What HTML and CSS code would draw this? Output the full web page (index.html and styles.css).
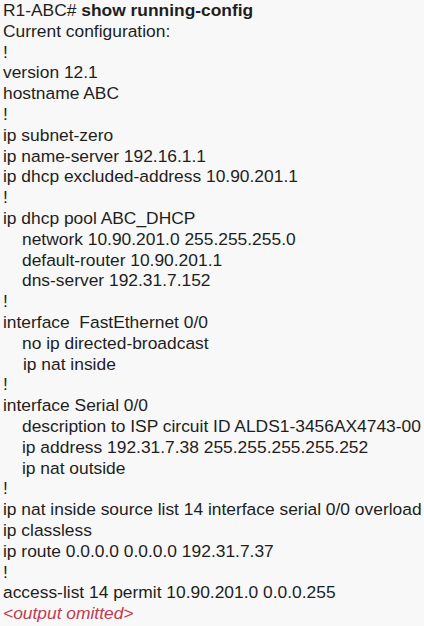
FILE: index.html
```html
<!DOCTYPE html>
<html>
<head>
<meta charset="utf-8">
<link rel="stylesheet" href="styles.css">
</head>
<body>
<div class="config">
<div class="line">R1-ABC# <b>show running-config</b></div>
<div class="line">Current configuration:</div>
<div class="line">!</div>
<div class="line">version 12.1</div>
<div class="line">hostname ABC</div>
<div class="line">!</div>
<div class="line">ip subnet-zero</div>
<div class="line">ip name-server 192.16.1.1</div>
<div class="line">ip dhcp excluded-address 10.90.201.1</div>
<div class="line">!</div>
<div class="line">ip dhcp pool ABC_DHCP</div>
<div class="line sub">network 10.90.201.0 255.255.255.0</div>
<div class="line sub">default-router 10.90.201.1</div>
<div class="line sub">dns-server 192.31.7.152</div>
<div class="line">!</div>
<div class="line">interface&nbsp; FastEthernet 0/0</div>
<div class="line sub">no ip directed-broadcast</div>
<div class="line sub2">ip nat inside</div>
<div class="line">!</div>
<div class="line">interface Serial 0/0</div>
<div class="line sub">description to ISP circuit ID ALDS1-3456AX4743-00</div>
<div class="line sub">ip address 192.31.7.38 255.255.255.255.252</div>
<div class="line sub">ip nat outside</div>
<div class="line">!</div>
<div class="line">ip nat inside source list 14 interface serial 0/0 overload</div>
<div class="line">ip classless</div>
<div class="line">ip route 0.0.0.0 0.0.0.0 192.31.7.37</div>
<div class="line">!</div>
<div class="line">access-list 14 permit 10.90.201.0 0.0.0.255</div>
<div class="line omitted">&lt;output omitted&gt;</div>
</div>
</body>
</html>
```
FILE: styles.css
```css
html, body {
  margin: 0;
  padding: 0;
  background: #f8f8f8;
}
.config {
  padding: 0 0 0 3px;
  font-family: "Liberation Sans", Arial, sans-serif;
  font-size: 17.4px;
  line-height: 20.8px;
  color: #1e1e1e;
  white-space: nowrap;
}
.line b {
  font-weight: bold;
}
.sub {
  padding-left: 19px;
}
.sub2 {
  padding-left: 20px;
}
.omitted {
  color: #c23a4e;
  font-style: italic;
}
```
